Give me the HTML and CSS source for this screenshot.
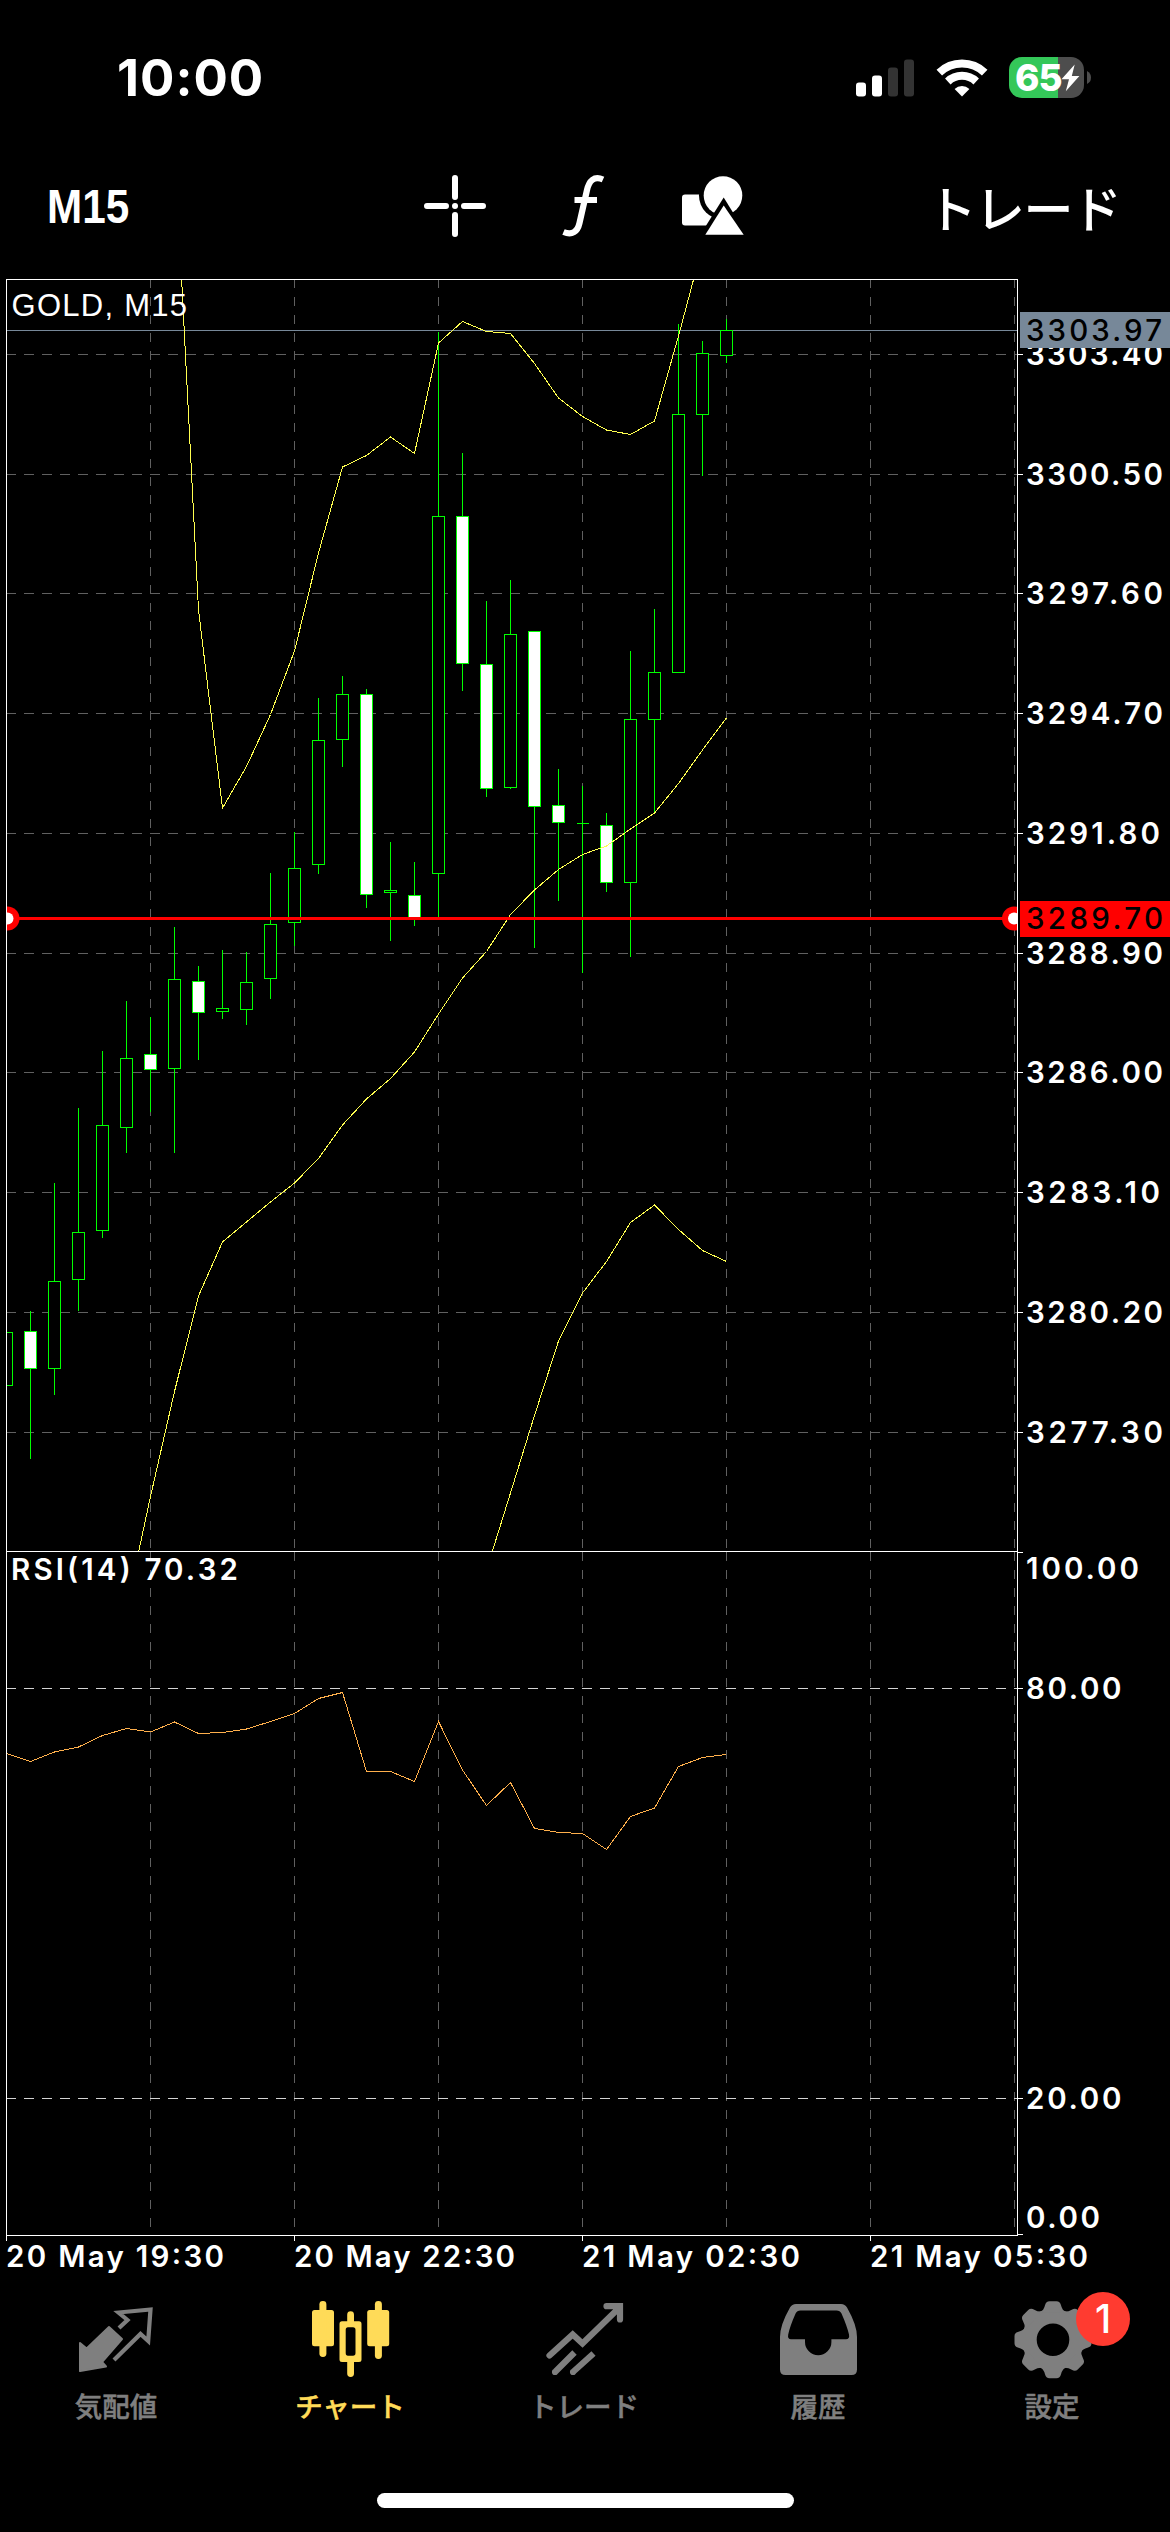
FILE: index.html
```html
<!DOCTYPE html>
<html lang="ja">
<head>
<meta charset="utf-8">
<title>GOLD, M15</title>
<link rel="stylesheet" href="styles.css">
</head>
<body>
<div class="screen">
  <header class="status-bar">
    <span class="clock">10:00</span>
    <div class="status-icons">
      <svg class="signal" width="58" height="38" viewBox="0 0 58 38">
        <rect x="0" y="23.5" width="10" height="14" rx="3" fill="#fff"/>
        <rect x="16" y="16.5" width="10" height="21" rx="3" fill="#fff"/>
        <rect x="32" y="8.5" width="10" height="29" rx="3" fill="#333"/>
        <rect x="48" y="0.5" width="10" height="37" rx="3" fill="#333"/>
      </svg>
      <svg class="wifi" width="52" height="38" viewBox="-26 -37.5 52 38">
        <path d="M-22.7-23.9A33 33 0 0 1 22.7-23.9M-14.2-15A20.7 20.7 0 0 1 14.2-15" fill="none" stroke="#fff" stroke-width="8"/>
        <path d="M0 0L-7.4-7.6A11.2 11.2 0 0 1 7.4-7.6Z" fill="#fff"/>
      </svg>
      <div class="battery">
        <span class="battery-level">65</span>
        <svg class="bolt" width="19" height="28" viewBox="0 0 19 28"><path d="M13.7 0.5L0.5 15.2H8L4.8 27.2L18.4 12H10.8Z" fill="#fff"/></svg>
      </div>
      <svg class="battery-cap" width="4" height="13" viewBox="0 0 4 13"><path d="M0 0Q4 2 4 6.5Q4 11 0 13Z" fill="#4d4d4d"/></svg>
    </div>
  </header>

  <nav class="toolbar">
    <span class="timeframe">M15</span>
    <svg class="tools" width="340" height="70" viewBox="414 171 340 70">
      <path d="M455 178V197M455 215V234M427 206H446M464 206H483M455 206h.01" fill="none" stroke="#fff" stroke-width="6" stroke-linecap="round"/>
      <path d="M603 179.5C594 175.500 589 181 587 190L579.500 223C577.500 232 572 235.500 563.500 232M574.500 200H597" fill="none" stroke="#fff" stroke-width="6.200"/>
      <rect x="682" y="194.500" width="32" height="31" rx="3" fill="#fff"/>
      <circle cx="723" cy="195.500" r="24" fill="#000"/>
      <circle cx="723" cy="195.500" r="19.300" fill="#fff"/>
      <path d="M723.700 197.500L697 240H750Z" fill="#000"/>
      <path d="M723.700 205.500L705.300 234.700H743.700Z" fill="#fff"/>
    </svg>
    <span class="trade">トレード</span>
  </nav>

  <main class="chart">
    <svg width="1170" height="2020" viewBox="0 260 1170 2020">
      <defs>
        <clipPath id="price-area"><rect x="7" y="280" width="1010" height="1271"/></clipPath>
      </defs>
      <g class="crisp">
        <path class="grid grid-h" d="M6 354.500H1017M6 474.500H1017M6 593.500H1017M6 713.500H1017M6 833.500H1017M6 953.500H1017M6 1072.500H1017M6 1192.500H1017M6 1312.500H1017M6 1432.500H1017"/>
        <path class="grid grid-v" d="M150.500 279V1551M294.500 279V1551M438.500 279V1551M582.500 279V1551M726.500 279V1551M870.500 279V1551M1014.500 279V1551"/>
        <path class="grid grid-v" d="M150.500 1552V2235M294.500 1552V2235M438.500 1552V2235M582.500 1552V2235M726.500 1552V2235M870.500 1552V2235M1014.500 1552V2235"/>
        <path class="level" d="M6 1688.500H1017M6 2098.500H1017"/>
        <path class="bid" d="M6 330.500H1017"/>

        <g clip-path="url(#price-area)">
          <path class="candle" d="M30.500 1311V1459M54.500 1183V1395M78.500 1108V1311M102.500 1051V1238M126.500 1001V1153M150.500 1017V1112M174.500 927V1153M198.500 966V1060M222.500 950V1019M246.500 952V1025M270.500 873V999M294.500 832V946M318.500 698V874M342.500 676V767M366.500 689V908M390.500 842V941M414.500 862V926M438.500 332V918M462.500 453V691M486.500 601V797M510.500 580V789M534.500 631V948M558.500 769V901M582.500 786V973M606.500 813V892M630.500 651V957M654.500 609V813M678.500 324V672M702.500 341V476M726.500 319V363"/>
          <path class="candle up" d="M0.500 1332.500h12V1385.500h-12zM48.500 1281.500h12V1368.500h-12zM72.500 1232.500h12V1279.500h-12zM96.500 1125.500h12V1230.500h-12zM120.500 1058.500h12V1127.500h-12zM168.500 979.500h12V1068.500h-12zM216.500 1008.500h12V1011.500h-12zM240.500 982.500h12V1009.500h-12zM264.500 924.500h12V978.500h-12zM288.500 868.500h12V922.500h-12zM312.500 740.500h12V864.500h-12zM336.500 694.500h12V739.500h-12zM384.500 890.500h12V892.500h-12zM432.500 516.500h12V873.500h-12zM504.500 634.500h12V787.500h-12zM576.500 823.500h12M624.500 719.500h12V882.500h-12zM648.500 672.500h12V719.500h-12zM672.500 414.500h12V672.500h-12zM696.500 353.500h12V414.500h-12zM720.500 330.500h12V355.500h-12z"/>
          <path class="candle down" d="M24.500 1331.500h12V1368.500h-12zM144.500 1054.500h12V1069.500h-12zM192.500 981.500h12V1012.500h-12zM360.500 694.500h12V894.500h-12zM408.500 895.500h12V918.500h-12zM456.500 516.500h12V663.500h-12zM480.500 664.500h12V788.500h-12zM528.500 631.500h12V806.500h-12zM552.500 805.500h12V822.500h-12zM600.500 825.500h12V882.500h-12z"/>
          <polyline class="band" points="174.500,140 198.500,610 222.500,808 246.500,766.500 270.500,714.500 294.500,651 318.500,553 342.500,467 366.500,455.500 390.500,437 414.500,453.500 438.500,343 462.500,321.500 486.500,331.500 510.500,333.500 534.500,363.500 558.500,398 582.500,416.500 606.500,430 630.500,434.500 654.500,421 678.500,336 702.500,246"/>
          <polyline class="band" points="126.500,1608 150.500,1496.500 174.500,1391.500 198.500,1296 222.500,1242 246.500,1222 270.500,1202 294.500,1183 318.500,1158.500 342.500,1125 366.500,1099 390.500,1078.500 414.500,1052 438.500,1014 462.500,978 486.500,951.500 510.500,914.500 534.500,890 558.500,869.500 582.500,854.500 606.500,846 630.500,829 654.500,813 678.500,783.500 702.500,750 726.500,718"/>
          <polyline class="band" points="486.500,1570 510.500,1493 534.500,1415.500 558.500,1341 582.500,1293 606.500,1261.500 630.500,1222.500 654.500,1205 678.500,1229.500 702.500,1250.500 726.500,1261.500"/>
          <path class="order" d="M7 918.500H1014"/>
          <circle cx="7.500" cy="918.500" r="12" fill="#f00"/><circle cx="7.500" cy="918.500" r="6" fill="#fff"/>
          <circle cx="1014" cy="918.500" r="12" fill="#f00"/><circle cx="1014" cy="918.500" r="6" fill="#fff"/>
        </g>

        <polyline class="rsi" points="6.500,1753.500 30.500,1761.500 54.500,1752 78.500,1747 102.500,1735.500 126.500,1728.500 150.500,1732 174.500,1722 198.500,1733.500 222.500,1732.500 246.500,1729 270.500,1721.500 294.500,1713.500 318.500,1698.500 342.500,1692.500 366.500,1771.500 390.500,1771.500 414.500,1781.500 438.500,1721.500 462.500,1770 486.500,1805.500 510.500,1782.500 534.500,1828.500 558.500,1832.500 582.500,1833.500 606.500,1849.500 630.500,1816.500 654.500,1808 678.500,1766.500 702.500,1757.500 726.500,1754.500"/>

        <path class="frame" d="M6.500 2241V279.500H1017.500V2235.500H6.500M6.500 1551.500H1017.500"/>
        <path class="frame" d="M1017 354.500h6M1017 474.500h6M1017 593.500h6M1017 713.500h6M1017 833.500h6M1017 953.500h6M1017 1072.500h6M1017 1192.500h6M1017 1312.500h6M1017 1432.500h6M1017 1552.500h6M1017 1688.500h6M1017 2098.500h6M1017 2234.500h6M294.500 2235v6M582.500 2235v6M870.500 2235v6"/>
      </g>

      <text class="symbol" x="11.500" y="315.500" textLength="175.500">GOLD, M15</text>
      <g class="label">
        <text x="11" y="1580" textLength="227">RSI(14) 70.32</text>
        <text x="1026" y="364.500" textLength="137">3303.40</text>
        <text x="1026" y="484.500" textLength="137">3300.50</text>
        <text x="1026" y="603.500" textLength="137">3297.60</text>
        <text x="1026" y="723.500" textLength="137">3294.70</text>
        <text x="1026" y="843.500" textLength="134">3291.80</text>
        <text x="1026" y="963.500" textLength="137">3288.90</text>
        <text x="1026" y="1082.500" textLength="137">3286.00</text>
        <text x="1026" y="1202.500" textLength="134">3283.10</text>
        <text x="1026" y="1322.500" textLength="137">3280.20</text>
        <text x="1026" y="1442.500" textLength="137">3277.30</text>
        <text x="1026" y="1579" textLength="113">100.00</text>
        <text x="1026" y="1698.500" textLength="95.500">80.00</text>
        <text x="1026" y="2109" textLength="95.500">20.00</text>
        <text x="1026" y="2228" textLength="74">0.00</text>
        <text x="6" y="2267" textLength="218">20 May 19:30</text>
        <text x="294" y="2267" textLength="221">20 May 22:30</text>
        <text x="582" y="2267" textLength="218">21 May 02:30</text>
        <text x="870" y="2267" textLength="218">21 May 05:30</text>
      </g>
      <rect x="1020" y="312" width="150" height="36" fill="#778899"/>
      <rect x="1020" y="901" width="150" height="36" fill="#f00"/>
      <g class="label tag">
        <text x="1026" y="341" textLength="136">3303.97</text>
        <text x="1026" y="928.500" textLength="137">3289.70</text>
      </g>
    </svg>
  </main>

  <footer class="tab-bar">
    <div class="tab">
      <svg width="100" height="96" viewBox="67 2290 100 96">
        <path d="M80 2343L86.600 2348.500L109 2327L122 2339L102 2362L106 2366.500L80 2371Z" fill="#7f7f7f" stroke="#7f7f7f" stroke-width="2" stroke-linejoin="round"/>
        <path d="M119 2328L127.500 2320L118.500 2312.500L150.500 2309.500L148.200 2341L140.500 2334L114 2360" fill="none" stroke="#7f7f7f" stroke-width="4.200"/>
      </svg>
      <span class="tab-label">気配値</span>
    </div>
    <div class="tab active">
      <svg width="100" height="96" viewBox="301 2290 100 96" fill="#ffdb58">
        <rect x="312" y="2310" width="22" height="36.300" rx="2.500"/><rect x="319.400" y="2301" width="7" height="56" rx="3.400"/>
        <path fill-rule="evenodd" d="M342 2321.300H359Q361.500 2321.300 361.500 2324V2359.500Q361.500 2362 359 2362H342Q339.500 2362 339.500 2359.500V2324Q339.500 2321.300 342 2321.300ZM348 2327.300Q345.700 2327.300 345.700 2330V2353Q345.700 2355.700 348 2355.700H353Q355.500 2355.700 355.500 2353V2330Q355.500 2327.300 353 2327.300Z"/>
        <path d="M347.200 2323V2314.700A3.400 3.400 0 0 1 354 2314.700V2323ZM347.200 2360V2373.500A3.400 3.400 0 0 0 354 2373.500V2360Z"/>
        <rect x="367.200" y="2310" width="22" height="36.300" rx="2.500"/><rect x="374.900" y="2301" width="7" height="58" rx="3.400"/>
      </svg>
      <span class="tab-label">チャート</span>
    </div>
    <div class="tab">
      <svg width="100" height="96" viewBox="535 2290 100 96">
        <path d="M549.500 2355.500L572.700 2334.500L582.500 2343.500L619.500 2307.500M606.500 2306.200H620V2319.500" fill="none" stroke="#7f7f7f" stroke-width="6.200" stroke-linecap="round"/>
        <path d="M555.500 2371.500L574.500 2352.500M573.500 2371.500L593.500 2353.500" fill="none" stroke="#7f7f7f" stroke-width="6.200"/>
        <path d="M555 2372h.01M573 2372h.01" stroke="#7f7f7f" stroke-width="6.200" stroke-linecap="round"/>
      </svg>
      <span class="tab-label">トレード</span>
    </div>
    <div class="tab">
      <svg width="100" height="96" viewBox="769 2290 100 96">
        <path fill="#7f7f7f" fill-rule="evenodd" d="M796 2304H841Q845 2304 847 2307.500Q857 2325 857 2337V2369.500Q857 2375 851.500 2375H785.500Q780 2375 780 2369.500V2337Q780 2325 790 2307.500Q792 2304 796 2304ZM800.500 2310.400Q797 2310.400 795.600 2313.500Q790 2326 788.200 2334.500Q787.400 2339.200 791 2339.200H805V2342A13.200 13.200 0 0 0 831.400 2342V2339.200H846Q849.800 2339.200 849 2334.500Q847 2326 841.500 2313.500Q840 2310.400 836.500 2310.400Z"/>
      </svg>
      <span class="tab-label">履歴</span>
    </div>
    <div class="tab">
      <svg width="100" height="96" viewBox="-50 -49.700 100 96" fill="#7f7f7f">
        <defs><path id="tooth" d="M-13-27Q-9-30-8-34.500Q-7-38.500-3.500-38.500H3.500Q7-38.500 8-34.500Q9-30 13-27Z"/></defs>
        <path fill-rule="evenodd" d="M0-31A31 31 0 0 1 0 31A31 31 0 0 1 0-31ZM0-16.300A16.300 16.300 0 0 0 0 16.300A16.300 16.300 0 0 0 0-16.300Z"/>
        <use href="#tooth"/><use href="#tooth" transform="rotate(45)"/><use href="#tooth" transform="rotate(90)"/><use href="#tooth" transform="rotate(135)"/><use href="#tooth" transform="rotate(180)"/><use href="#tooth" transform="rotate(225)"/><use href="#tooth" transform="rotate(270)"/><use href="#tooth" transform="rotate(315)"/>
      </svg>
      <span class="tab-label">設定</span>
      <span class="badge">1</span>
    </div>
  </footer>
  <div class="home-indicator"></div>
</div>
</body>
</html>
```
FILE: styles.css
```css
* { box-sizing: border-box; }
body { margin: 0; background: #000; color: #fff; font-family: Inter, "Noto Sans CJK JP", sans-serif; }
svg { display: block; flex: none; }
.screen { width: 1170px; height: 2532px; display: flex; flex-direction: column; overflow: hidden; background: #000; }

.status-bar { height: 150px; flex: none; display: flex; justify-content: space-between; align-items: flex-start; padding: 57px 79px 0 117px; }
.clock { font-size: 51px; line-height: 42px; font-weight: 700; letter-spacing: 1px; }
.status-icons { display: flex; align-items: center; height: 41px; }
.wifi { margin-left: 22px; }
.battery { margin-left: 21px; width: 75px; height: 41px; border-radius: 13px; display: flex; align-items: center; padding-left: 6px; background: linear-gradient(to right, #34c759 49px, #4d4d4d 49px); }
.battery-level { width: 46px; font-size: 37px; line-height: 41px; font-weight: 800; letter-spacing: -1px; }
.battery-cap { margin-left: 3px; }

.toolbar { height: 110px; flex: none; display: flex; align-items: center; padding: 2px 50px 0 47px; }
.timeframe { width: 367px; font-family: "Liberation Sans", sans-serif; font-size: 48px; font-weight: 700; line-height: 60px; transform: scaleX(0.88); transform-origin: left; position: relative; top: 1px; }
.trade { margin-left: auto; font-family: "Noto Sans CJK JP", sans-serif; font-size: 50px; line-height: 60px; font-weight: 500; letter-spacing: -1.7px; white-space: nowrap; }

.chart { height: 2020px; flex: none; }
.crisp { shape-rendering: crispEdges; fill: none; stroke-width: 1; }
.crisp circle { shape-rendering: auto; }
.grid { stroke: #606060; }
.grid-h { stroke-dasharray: 10 8; }
.grid-v { stroke-dasharray: 9 9; }
.level { stroke: #d3d3d3; stroke-dasharray: 10 8; }
.bid { stroke: #778899; }
.candle { stroke: #0f0; }
.up { fill: #000; }
.down { fill: #fff; }
.band { stroke: #ffff50; }
.rsi { stroke: #ffb04c; }
.order { stroke: #f00; stroke-width: 3; }
.frame { stroke: #fff; }
.symbol { font-family: "Liberation Sans", sans-serif; font-size: 31px; fill: #fff; }
.label { font-family: Inter, sans-serif; font-size: 29.5px; font-weight: 600; fill: #fff; }
.tag { fill: #000; font-weight: 500; }

.tab-bar { height: 190px; flex: none; display: grid; grid-template-columns: repeat(5, 234px); }
.tab { position: relative; display: flex; flex-direction: column; align-items: center; padding-top: 10px; color: #7f7f7f; }
.tab-label { margin: 3px 2px 0 0; font-family: "Noto Sans CJK JP", sans-serif; font-size: 27.5px; font-weight: 500; line-height: 32px; white-space: nowrap; -webkit-text-stroke: 0.5px currentColor; }
.active { color: #ffdb58; }
.badge { position: absolute; left: 140px; top: 12px; width: 54px; height: 54px; border-radius: 50%; background: #ff3b30; color: #fff; font-size: 39px; font-weight: 500; line-height: 54px; text-align: center; }
.home-indicator { width: 417px; height: 15px; margin: 23px auto 0; border-radius: 8px; background: #fff; flex: none; }
```
